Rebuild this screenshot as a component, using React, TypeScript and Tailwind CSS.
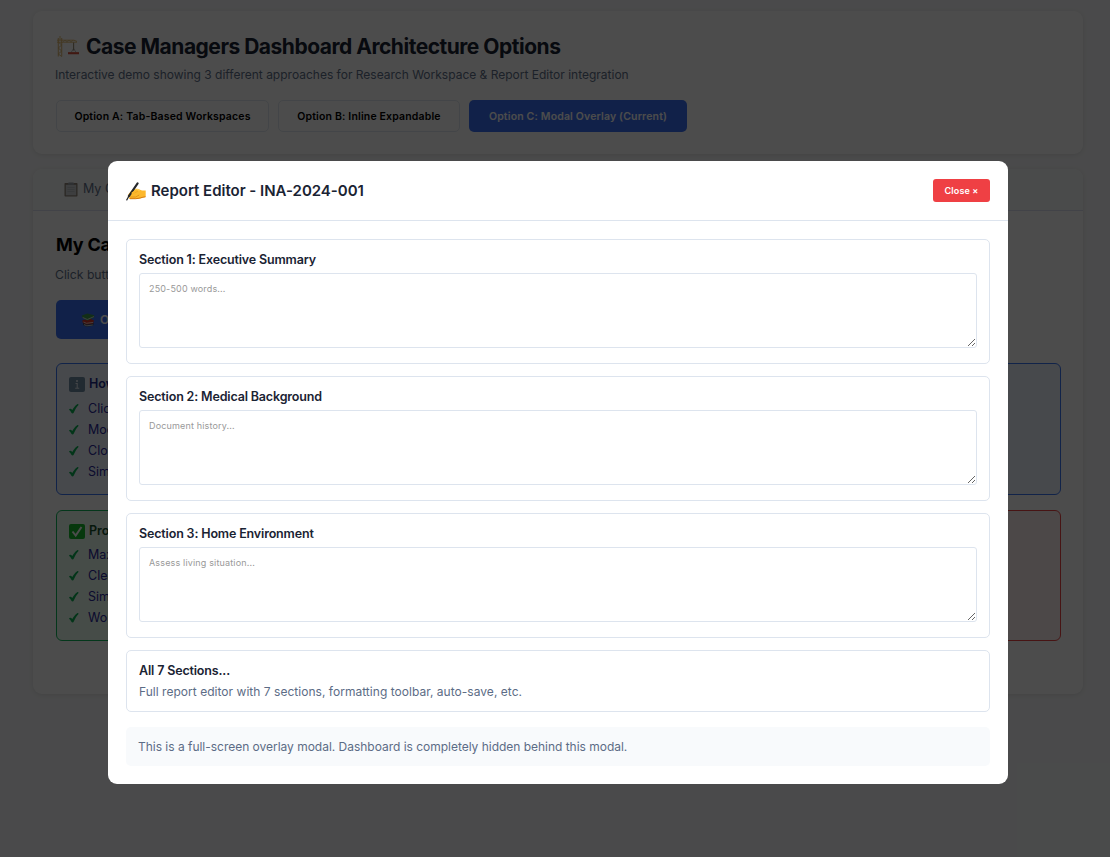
import type { ReactNode } from "react";

function Crane() {
  return (
    <svg width="24" height="22" viewBox="0 0 24 22" className="mr-[6px] shrink-0" fill="none">
      <path d="M2.300 2V20.500M5.700 2V20.500" stroke="#e0bd7c" strokeWidth="1.100" />
      <path d="M2.300 6l3.400 3-3.400 3 3.400 3-3.400 3 3.400 2.500" stroke="#d9b36c" strokeWidth=".9" />
      <path d="M4 0v4M1 4.200h17l3 1.300M1 6.200h20" stroke="#e2b968" strokeWidth=".9" />
      <path d="M7 6.200l2-2 2 2 2-2 2 2 2-2" stroke="#d9b36c" strokeWidth=".7" />
      <path d="M17.600 6.500v8" stroke="#9c8f74" strokeWidth="1.100" />
      <path d="M17.600 12.500l-2.500 4M17.600 12.500l2.500 4" stroke="#8a8a8a" strokeWidth=".6" />
      <path d="M12 17.200h11" stroke="#d9513c" strokeWidth="2.100" />
    </svg>
  );
}

function WritingHand() {
  return (
    <svg width="20" height="19" viewBox="0 0 20 19" className="mr-[5px] shrink-0">
      <path d="M2.500 12.300C4 10 5.500 8.600 7.500 7.600c1.600-.9 3.200-1.300 4.700-.6l3 1.300c1.300.3 2.900.2 4.500.2v6.500c-2 .2-3.500.8-5.400 1.400-1.700.5-3.300.6-5 .6H4.200c-1.500 0-1.500-1.300-.3-1.600-1.500.1-2.300-.8-1.600-1.500-.6-.2-.5-1.100.2-1.600z" fill="#fdb82c" />
      <path d="M4 16.700h5.500c3.500 0 6.500-1.600 10-1.900" stroke="#d67b12" strokeWidth="1" fill="none" />
      <path d="M6 11.700l5.500-2.400M4.200 15h5.500l3.500-2" stroke="#dc8d18" strokeWidth=".8" fill="none" />
      <path d="M7.500 8.500c2-1.200 4-1.300 6-.2" stroke="#ffd866" strokeWidth="1" fill="none" />
      <path d="M11.600 1.300L2.900 14.200" stroke="#25272b" strokeWidth="2.100" strokeLinecap="round" />
      <path d="M2.800 14.200L.8 17.900" stroke="#25272b" strokeWidth="1.200" strokeLinecap="round" />
      <path d="M10.500 8.500l-4 2.600" stroke="#fdb82c" strokeWidth="2" strokeLinecap="round" />
    </svg>
  );
}

function Clipboard() {
  return (
    <svg width="14" height="15" viewBox="0 0 14 15" className="mr-[5px] shrink-0">
      <rect x=".5" y="1" width="13" height="13.500" rx=".8" fill="#8f8478" />
      <rect x="1.800" y="2.800" width="10.400" height="10.500" fill="#ccd0d3" />
      <rect x="4" y=".5" width="6" height="2.500" rx="1" fill="#9ba1a8" />
      <path d="M3.500 5.500h7M3.500 7.500h7M3.500 9.500h7" stroke="#b2b6bb" strokeWidth=".7" />
    </svg>
  );
}

function Books() {
  return (
    <svg width="14" height="14" viewBox="0 0 14 14" className="mr-[5px] shrink-0">
      <path d="M2 10l8-1 3 1.500-1 2.300-6.500 1L2 12z" fill="#3f4f68" />
      <path d="M1.500 7l8.500-1 3 1.500-1 3-6.500 1-4-2z" fill="#d5382b" />
      <path d="M2.500 9l3 1.300 6.500-.9M3 11.600l2.800 1.200 6-.8" stroke="#eee" strokeWidth=".8" fill="none" />
      <path d="M.8 2.500L6.500.5l6.700 1.800v2L6.500 7.500 1.500 4.800z" fill="#3d9c52" />
      <path d="M1.700 4.500l4.600 2L13 3.600" stroke="#e9eee6" strokeWidth=".8" fill="none" />
    </svg>
  );
}

function InfoBadge() {
  return (
    <svg width="16" height="15" viewBox="0 0 16 15" className="mr-[4px] shrink-0">
      <rect width="16" height="15" rx="2" fill="#6f8ca5" />
      <circle cx="8" cy="4" r="1.100" fill="#dfe7ee" />
      <path d="M6.500 6.500H8.200v5M6.200 11.300h4" stroke="#dfe7ee" strokeWidth="1.100" fill="none" />
    </svg>
  );
}

function CheckBadge() {
  return (
    <svg width="16" height="15" viewBox="0 0 16 15" className="mr-[4px] shrink-0">
      <rect width="16" height="15" rx="2" fill="#14bd2c" />
      <path d="M3.500 7.500l3.200 4L12.500 3" stroke="#fff" strokeWidth="2" fill="none" />
    </svg>
  );
}

function Tick() {
  return (
    <svg width="10" height="10" viewBox="0 0 10 10" className="mr-[9px] mb-[1px] shrink-0">
      <path d="M0 5.700C.5 4.300 1.900 4.300 3.300 6 4.700 3.500 6.300 1.400 8.200.2 9.200-.2 9.900.5 9.300 1.300 7.400 3.400 6.100 5.600 4.800 8.600 4.300 9.700 2.900 9.800 2.400 8.800 1.800 7.400 1 6.400 0 5.700z" fill="#0cb255" />
    </svg>
  );
}

function Points({ items }: { items: string[] }) {
  return (
    <ul>
      {items.map((item) => (
        <li key={item} className="flex h-[21px] items-center text-[12.500px] text-[#28289c]">
          <Tick />
          {item}
        </li>
      ))}
    </ul>
  );
}

function Dashboard() {
  return (
    <div className="flex h-full flex-col bg-[#f8f9fa] pl-[33px] pr-[27px] pt-[11px]">
      <header className="h-[143px] shrink-0 rounded-[9px] bg-white px-[23px] pt-[23px] shadow-[0_1px_5px_rgba(0,0,0,0.1)]">
        <h1 className="flex h-[26px] items-center text-[21px] font-bold tracking-[-0.49px] text-[#1a2333]">
          <Crane />
          Case Managers Dashboard Architecture Options
        </h1>
        <p className="-ml-px mt-[5px] h-[20px] text-[12px] leading-[20px] text-[#607089]">
          Interactive demo showing 3 different approaches for Research Workspace &amp; Report Editor integration
        </p>
        <div className="mt-[15px] flex gap-[9px] text-[10.500px] font-semibold tracking-[0.16px] text-black">
          <button className="h-[32px] w-[213px] rounded-[5px] border border-[#e2e8f0] pt-[2px]">Option A: Tab-Based Workspaces</button>
          <button className="h-[32px] w-[182px] rounded-[5px] border border-[#e2e8f0] pt-[2px]">Option B: Inline Expandable</button>
          <button className="h-[32px] w-[218px] rounded-[5px] bg-[#3b70f3] pt-[2px] text-white">Option C: Modal Overlay (Current)</button>
        </div>
      </header>
      <main className="mt-[15px] h-[525px] shrink-0 overflow-hidden rounded-[9px] bg-white shadow-[0_1px_5px_rgba(0,0,0,0.1)]">
        <nav className="flex h-[42px] items-center border-b border-[#dce2f0] bg-[#f9fafb] pl-[31px] text-[12.500px] text-[#607089]">
          <Clipboard />
          My Cases
        </nav>
        <div className="px-[23px] pt-[21px]">
          <h2 className="h-[26px] text-[18px] leading-[26px] font-bold tracking-[-0.2px] text-black">My Cases</h2>
          <p className="-ml-px mt-[7px] h-[20px] text-[12.200px] leading-[20px] text-[#607089]">Click buttons to open</p>
          <button className="mt-[15px] flex h-[39px] w-[240px] items-center rounded-[5px] bg-[#3b70f3] pl-[25px] text-[12px] font-semibold text-white">
            <Books />
            Open Research
          </button>
          <section className="mt-[24px] h-[132px] w-[1005px] rounded-[6px] border border-[#3b76f6] bg-[#eff6ff] px-3 pt-[10px]">
            <h3 className="mb-[5px] flex h-[20px] items-center text-[12.500px] font-semibold text-[#1e2a8a]">
              <InfoBadge />
              How It Works
            </h3>
            <Points items={["Click a button", "Modal opens", "Close to return", "Simple to use"]} />
          </section>
          <div className="mt-[15px] grid w-[1005px] grid-cols-2 gap-4">
            <section className="h-[131px] rounded-[6px] border border-[#10b95c] bg-[#ecfdf0] px-3 pt-[10px]">
              <h3 className="mb-[4px] flex h-[20px] items-center text-[12.500px] font-semibold text-[#14532d]">
                <CheckBadge />
                Pros
              </h3>
              <Points items={["Maximum focus", "Clear separation", "Simple to build", "Works anywhere"]} />
            </section>
            <section className="h-[131px] rounded-[6px] border border-[#ef4444] bg-[#fef2f2]" />
          </div>
        </div>
      </main>
    </div>
  );
}

function Section({ title, children }: { title: string; children: ReactNode }) {
  return (
    <section className="rounded-[5px] border border-[#dde4ee] px-3 pt-[10px]">
      <h3 className="h-[20px] text-[12.500px] leading-[20px] font-semibold tracking-[-0.16px] text-[#1a2333]">{title}</h3>
      {children}
    </section>
  );
}

function Field({ hint }: { hint: string }) {
  return (
    <textarea
      placeholder={hint}
      className="mt-[3px] mb-[15px] block h-[75px] w-full resize-y rounded-[3px] border border-[#dde4ee] px-[9px] py-[8px] text-[9px] leading-[13px] tracking-[0.16px] outline-none placeholder:text-[#999999]"
    />
  );
}

export default function App() {
  return (
    <div className="relative h-[857px] w-[1110px] overflow-hidden font-['Inter','Liberation_Sans',sans-serif]">
      <Dashboard />
      <div className="absolute inset-0 bg-black/70 pt-[161px] pl-[108px]">
        <div className="h-[623px] w-[900px] rounded-[9px] bg-white">
          <header className="flex h-[60px] items-center justify-between border-b border-[#dde4ee] px-[18px]">
            <h2 className="flex items-center pt-[1px] text-[15px] leading-[24px] font-semibold tracking-[-0.02px] text-[#1a2333]">
              <WritingHand />
              Report Editor - INA-2024-001
            </h2>
            <button className="h-[23px] w-[57px] rounded-[3px] bg-[#ef4044] text-[9px] font-semibold tracking-[0.1px] text-white">Close ×</button>
          </header>
          <div className="flex flex-col gap-3 px-[18px] pt-[18px]">
            <Section title="Section 1: Executive Summary"><Field hint="250-500 words..." /></Section>
            <Section title="Section 2: Medical Background"><Field hint="Document history..." /></Section>
            <Section title="Section 3: Home Environment"><Field hint="Assess living situation..." /></Section>
            <Section title="All 7 Sections...">
              <p className="mb-[9px] h-[21px] text-[12px] leading-[21px] tracking-[0.03px] text-[#5c6c86]">Full report editor with 7 sections, formatting toolbar, auto-save, etc.</p>
            </Section>
            <p className="mt-[3px] h-[39px] rounded-[5px] bg-[#f8fafc] px-3 text-[12px] leading-[39px] tracking-[-0.02px] text-[#5c6c86]">
              This is a full-screen overlay modal. Dashboard is completely hidden behind this modal.
            </p>
          </div>
        </div>
      </div>
    </div>
  );
}
